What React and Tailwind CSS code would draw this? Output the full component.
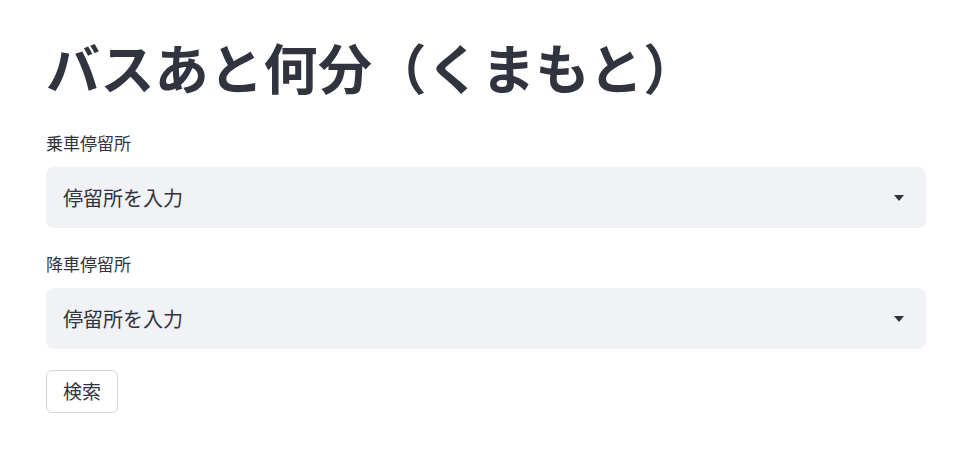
import React from 'react';

const font = { fontFamily: '"Noto Sans CJK JP", "Noto Sans", sans-serif' };

function StopSelect({ label }) {
  return (
    <div className="flex flex-col">
      <div className="text-[17px] leading-[24px] text-[#31333F]">{label}</div>
      <div className="mt-[12px] h-[61px] w-[880px] rounded-[8px] bg-[#F0F2F6] flex items-center justify-between pl-[17px] pr-[22px]">
        <span className="text-[20px] text-[#31333F]">停留所を入力</span>
        <svg width="10" height="6" viewBox="0 0 10 6" className="text-[#31333F]">
          <path d="M0 0 L10 0 L5 6 Z" fill="currentColor" />
        </svg>
      </div>
    </div>
  );
}

export default function App() {
  return (
    <div className="min-h-screen bg-white px-[46px] pt-[34px]" style={font}>
      <h1 className="text-[54px] leading-[66px] font-bold text-[#31333F] tracking-[0.4px]">
        バスあと何分（くまもと）
      </h1>

      <div className="mt-[31px] flex flex-col gap-[24px]">
        <StopSelect label="乗車停留所" />
        <StopSelect label="降車停留所" />
      </div>

      <button className="mt-[21px] h-[43px] w-[72px] rounded-[6px] border border-[#D6D6D9] bg-white text-[19px] text-[#31333F]">
        検索
      </button>
    </div>
  );
}
